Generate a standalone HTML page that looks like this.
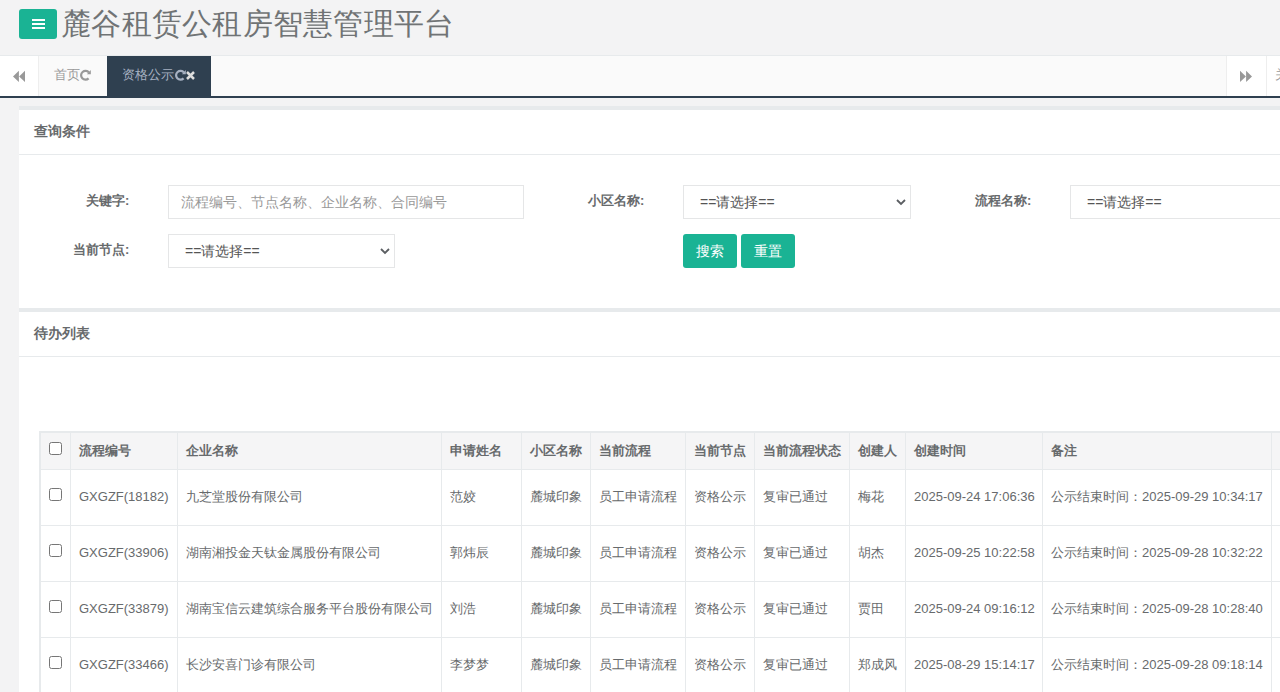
<!DOCTYPE html>
<html><head><meta charset="utf-8">
<style>
*{box-sizing:border-box;margin:0;padding:0}
html,body{width:1280px;height:692px;overflow:hidden}
body{background:#f3f3f4;font-family:"Liberation Sans",sans-serif;color:#676a6c;font-size:13px;position:relative}
.abs{position:absolute}
#hdr{left:0;top:0;width:1280px;height:56px;background:#f3f3f4;border-bottom:1px solid #e7eaec}
#menu{left:19px;top:9px;width:38px;height:30px;background:#1ab394;border-radius:3px}
#menu i{position:absolute;left:13px;width:13px;height:2px;background:#fff}
#title{left:61px;top:3px;font-size:30px;line-height:42px;color:#707375;white-space:nowrap;font-weight:300;letter-spacing:0.25px}
#tabs{left:0;top:56px;width:1280px;height:42px;background:#fafafa;border-bottom:2px solid #2f4050}
.navbtn{top:0;height:40px;background:#fff}
.tab{top:0;height:40px;line-height:38px;font-size:13px;color:#999;white-space:nowrap}
.ibox{left:19px;width:1261px;background:#fff;border-top:4px solid #e7eaec}
.ititle{position:absolute;left:0;top:0;width:100%;height:45px;border-bottom:1px solid #e7eaec}
.ititle h5{position:absolute;left:15px;top:-1px;font-size:14px;line-height:45px;font-weight:bold;color:#676a6c}
.lbl{font-weight:bold;font-size:13px;line-height:20px;color:#676a6c;white-space:nowrap}
.inp{background:#fff;border:1px solid #e5e6e7;height:34px;font-size:14px;line-height:32px;white-space:nowrap;overflow:hidden}
.btn{background:#1ab394;color:#fff;border-radius:3px;height:34px;width:54px;font-size:14px;line-height:34px;text-align:center}
table{position:absolute;border-collapse:collapse;table-layout:fixed;background:#fff}
td,th{border:1px solid #e7eaec;text-align:left;white-space:nowrap;overflow:hidden;padding:0 0 0 8px;font-size:13px;color:#676a6c}
th{background:#f5f5f6;font-weight:bold;height:37px}
td{height:56px}
.cb{display:block;width:13px;height:13px;border:1px solid #767676;border-radius:2px;background:#fff;margin-left:1px}
.hl{left:41px;width:1239px;height:1px;background:#e7eaec}
.vl{top:433px;width:1px;height:259px;background:#e7eaec}
.th{font-weight:bold;line-height:20px;white-space:nowrap}
.td{line-height:20px;white-space:nowrap}
.cbx{width:13px;height:13px;margin:0}
</style></head><body>
<div id="hdr" class="abs"></div>
<div id="menu" class="abs"><i style="top:10px"></i><i style="top:14px"></i><i style="top:18px"></i></div>
<div id="title" class="abs">麓谷租赁公租房智慧管理平台</div>

<div id="tabs" class="abs">
  <div class="abs navbtn" style="left:0;width:39px;border-right:1px solid #eee">
    <svg class="abs" style="left:13px;top:14px" width="12" height="13" viewBox="0 0 12 13"><path d="M0 6.4L5.9 0.8V12Z M6.1 6.4L12 0.8V12Z" fill="#999"/></svg>
  </div>
  <div class="abs tab" style="left:39px;width:68px;padding-left:15px">首页<svg style="position:absolute;left:40px;top:13px" width="13" height="13" viewBox="0 0 13 13"><path d="M9.9 3.5A4.4 4.4 0 1 0 9.6 9.4" fill="none" stroke="#999" stroke-width="2.2"/><path d="M7.9 5.2L11.8 5.2L11.8 1.1Z" fill="#999"/></svg></div>
  <div class="abs tab" style="left:107px;width:104px;padding-left:15px;background:#2f4050;color:#a7b1c2">资格公示<svg style="position:absolute;left:67px;top:13px" width="13" height="13" viewBox="0 0 13 13"><path d="M9.9 3.5A4.4 4.4 0 1 0 9.6 9.4" fill="none" stroke="#a7b1c2" stroke-width="2.2"/><path d="M7.9 5.2L11.8 5.2L11.8 1.1Z" fill="#a7b1c2"/></svg><svg style="position:absolute;left:79px;top:15px" width="9" height="9" viewBox="0 0 9 9"><path d="M1 1L8 8M8 1L1 8" stroke="#ddd" stroke-width="2.5"/></svg></div>
  <div class="abs navbtn" style="left:1226px;width:41px;border-left:1px solid #eee;border-right:1px solid #eee">
    <svg class="abs" style="left:13px;top:14px" width="12" height="13" viewBox="0 0 12 13"><path d="M12 6.4L6.1 0.8V12Z M5.9 6.4L0 0.8V12Z" fill="#999"/></svg>
  </div>
  <div class="abs tab" style="left:1267px;width:13px;background:#fff;color:#999;padding-left:8px;overflow:hidden">关闭操作</div>
</div>

<!-- ibox 1 -->
<div class="abs ibox" style="top:106px;height:202px">
  <div class="ititle"><h5>查询条件</h5></div>
</div>
<div class="abs lbl" style="left:86px;top:191px">关键字:</div>
<div class="abs inp" style="left:168px;top:185px;width:356px;padding-left:12px;color:#999">流程编号、节点名称、企业名称、合同编号</div>
<div class="abs lbl" style="left:588px;top:191px">小区名称:</div>
<div class="abs inp" style="left:683px;top:185px;width:228px;padding-left:16px;color:#555">==请选择==<svg class="abs" style="left:212px;top:12px" width="10" height="8" viewBox="0 0 10 8"><path d="M1 2L5 6L9 2" fill="none" stroke="#5b5e62" stroke-width="1.8"/></svg></div>
<div class="abs lbl" style="left:975px;top:191px">流程名称:</div>
<div class="abs inp" style="left:1070px;top:185px;width:240px;padding-left:16px;color:#555">==请选择==</div>
<div class="abs lbl" style="left:73px;top:240px">当前节点:</div>
<div class="abs inp" style="left:168px;top:234px;width:227px;padding-left:16px;color:#555">==请选择==<svg class="abs" style="left:211px;top:12px" width="10" height="8" viewBox="0 0 10 8"><path d="M1 2L5 6L9 2" fill="none" stroke="#5b5e62" stroke-width="1.8"/></svg></div>
<div class="abs btn" style="left:683px;top:234px">搜索</div>
<div class="abs btn" style="left:741px;top:234px">重置</div>

<!-- ibox 2 -->
<div class="abs ibox" style="top:308px;height:400px">
  <div class="ititle"><h5>待办列表</h5></div>
</div>

<div class="abs" style="left:39px;top:431px;width:1241px;height:261px;background:#fff;border-left:2px solid #e7eaec;border-top:2px solid #e7eaec"></div>
<div class="abs" style="left:41px;top:433px;width:1239px;height:36px;background:#f5f5f6"></div>
<div class="abs hl" style="top:469px"></div>
<div class="abs hl" style="top:525px"></div>
<div class="abs hl" style="top:581px"></div>
<div class="abs hl" style="top:637px"></div>
<div class="abs vl" style="left:70px"></div>
<div class="abs vl" style="left:177px"></div>
<div class="abs vl" style="left:441px"></div>
<div class="abs vl" style="left:521px"></div>
<div class="abs vl" style="left:590px"></div>
<div class="abs vl" style="left:685px"></div>
<div class="abs vl" style="left:754px"></div>
<div class="abs vl" style="left:849px"></div>
<div class="abs vl" style="left:905px"></div>
<div class="abs vl" style="left:1042px"></div>
<div class="abs vl" style="left:1271px"></div>
<input type="checkbox" class="abs cbx" style="left:49px;top:442px">
<div class="abs th" style="left:79px;top:441px">流程编号</div>
<div class="abs th" style="left:186px;top:441px">企业名称</div>
<div class="abs th" style="left:450px;top:441px">申请姓名</div>
<div class="abs th" style="left:530px;top:441px">小区名称</div>
<div class="abs th" style="left:599px;top:441px">当前流程</div>
<div class="abs th" style="left:694px;top:441px">当前节点</div>
<div class="abs th" style="left:763px;top:441px">当前流程状态</div>
<div class="abs th" style="left:858px;top:441px">创建人</div>
<div class="abs th" style="left:914px;top:441px">创建时间</div>
<div class="abs th" style="left:1051px;top:441px">备注</div>
<input type="checkbox" class="abs cbx" style="left:49px;top:488px">
<div class="abs td" style="left:79px;top:487px">GXGZF(18182)</div>
<div class="abs td" style="left:186px;top:487px">九芝堂股份有限公司</div>
<div class="abs td" style="left:450px;top:487px">范姣</div>
<div class="abs td" style="left:530px;top:487px">麓城印象</div>
<div class="abs td" style="left:599px;top:487px">员工申请流程</div>
<div class="abs td" style="left:694px;top:487px">资格公示</div>
<div class="abs td" style="left:763px;top:487px">复审已通过</div>
<div class="abs td" style="left:858px;top:487px">梅花</div>
<div class="abs td" style="left:914px;top:487px">2025-09-24 17:06:36</div>
<div class="abs td" style="left:1051px;top:487px">公示结束时间：2025-09-29 10:34:17</div>
<input type="checkbox" class="abs cbx" style="left:49px;top:544px">
<div class="abs td" style="left:79px;top:543px">GXGZF(33906)</div>
<div class="abs td" style="left:186px;top:543px">湖南湘投金天钛金属股份有限公司</div>
<div class="abs td" style="left:450px;top:543px">郭炜辰</div>
<div class="abs td" style="left:530px;top:543px">麓城印象</div>
<div class="abs td" style="left:599px;top:543px">员工申请流程</div>
<div class="abs td" style="left:694px;top:543px">资格公示</div>
<div class="abs td" style="left:763px;top:543px">复审已通过</div>
<div class="abs td" style="left:858px;top:543px">胡杰</div>
<div class="abs td" style="left:914px;top:543px">2025-09-25 10:22:58</div>
<div class="abs td" style="left:1051px;top:543px">公示结束时间：2025-09-28 10:32:22</div>
<input type="checkbox" class="abs cbx" style="left:49px;top:600px">
<div class="abs td" style="left:79px;top:599px">GXGZF(33879)</div>
<div class="abs td" style="left:186px;top:599px">湖南宝信云建筑综合服务平台股份有限公司</div>
<div class="abs td" style="left:450px;top:599px">刘浩</div>
<div class="abs td" style="left:530px;top:599px">麓城印象</div>
<div class="abs td" style="left:599px;top:599px">员工申请流程</div>
<div class="abs td" style="left:694px;top:599px">资格公示</div>
<div class="abs td" style="left:763px;top:599px">复审已通过</div>
<div class="abs td" style="left:858px;top:599px">贾田</div>
<div class="abs td" style="left:914px;top:599px">2025-09-24 09:16:12</div>
<div class="abs td" style="left:1051px;top:599px">公示结束时间：2025-09-28 10:28:40</div>
<input type="checkbox" class="abs cbx" style="left:49px;top:656px">
<div class="abs td" style="left:79px;top:655px">GXGZF(33466)</div>
<div class="abs td" style="left:186px;top:655px">长沙安喜门诊有限公司</div>
<div class="abs td" style="left:450px;top:655px">李梦梦</div>
<div class="abs td" style="left:530px;top:655px">麓城印象</div>
<div class="abs td" style="left:599px;top:655px">员工申请流程</div>
<div class="abs td" style="left:694px;top:655px">资格公示</div>
<div class="abs td" style="left:763px;top:655px">复审已通过</div>
<div class="abs td" style="left:858px;top:655px">郑成风</div>
<div class="abs td" style="left:914px;top:655px">2025-08-29 15:14:17</div>
<div class="abs td" style="left:1051px;top:655px">公示结束时间：2025-09-28 09:18:14</div>
</body></html>
